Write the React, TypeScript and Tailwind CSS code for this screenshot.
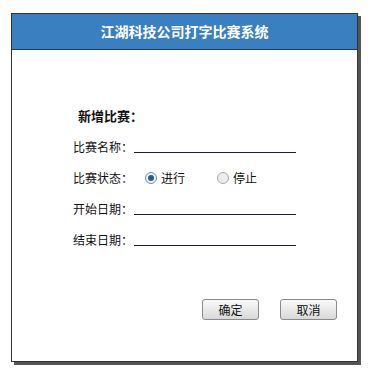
export default function App() {
  const font = { fontFamily: '"Noto Sans CJK SC", "Liberation Sans", sans-serif' }

  return (
    <div className="h-[380px] w-[368px] bg-white pl-[11px] pt-[13px] text-[12px] text-[#111]" style={font}>
      <div className="flex h-[349px] w-[347px] flex-col border border-[#333] bg-white shadow-[3px_3px_0_#555]">
        <div className="flex h-[36px] items-center justify-center border-b border-[#2a3a4a] bg-[#3a80c1] text-[14px] font-bold text-white">
          江湖科技公司打字比赛系统
        </div>

        <div className="flex flex-1 flex-col pl-[61px]">
          <div className="mt-[58px] pl-[5px] text-[13px] font-bold leading-[16px]">新增比赛：</div>

          <div className="mt-[15px] flex flex-col gap-[15px]">
            <div className="flex h-[16px] items-center">
              <span className="w-[61px]">比赛名称：</span>
              <span className="mt-[10px] w-[162px] border-b border-[#1a1a5a]" />
            </div>

            <div className="flex h-[16px] items-center">
              <span className="w-[72px]">比赛状态：</span>
              <span className="flex items-center gap-[4px]">
                <span className="flex h-[12px] w-[12px] items-center justify-center rounded-full border border-[#6f8fae] bg-[#eef3f8]">
                  <span className="h-[6px] w-[6px] rounded-full bg-[#235c8e]" />
                </span>
                进行
              </span>
              <span className="ml-[32px] flex items-center gap-[4px]">
                <span className="h-[12px] w-[12px] rounded-full border border-[#a9a9a9] bg-[#ececec]" />
                停止
              </span>
            </div>

            <div className="flex h-[16px] items-center">
              <span className="w-[61px]">开始日期：</span>
              <span className="mt-[10px] w-[162px] border-b border-[#1a1a5a]" />
            </div>

            <div className="flex h-[16px] items-center">
              <span className="w-[61px]">结束日期：</span>
              <span className="mt-[10px] w-[162px] border-b border-[#1a1a5a]" />
            </div>
          </div>

          <div className="mt-[51px] flex gap-[21px] pl-[129px]">
            <button className="h-[21px] w-[57px] rounded-[3px] border border-[#8a8a8a] bg-gradient-to-b from-[#fafafa] to-[#d8d8d8] text-[12px] leading-none text-[#111]">
              确定
            </button>
            <button className="h-[21px] w-[57px] rounded-[3px] border border-[#8a8a8a] bg-gradient-to-b from-[#fafafa] to-[#d8d8d8] text-[12px] leading-none text-[#111]">
              取消
            </button>
          </div>
        </div>
      </div>
    </div>
  )
}
